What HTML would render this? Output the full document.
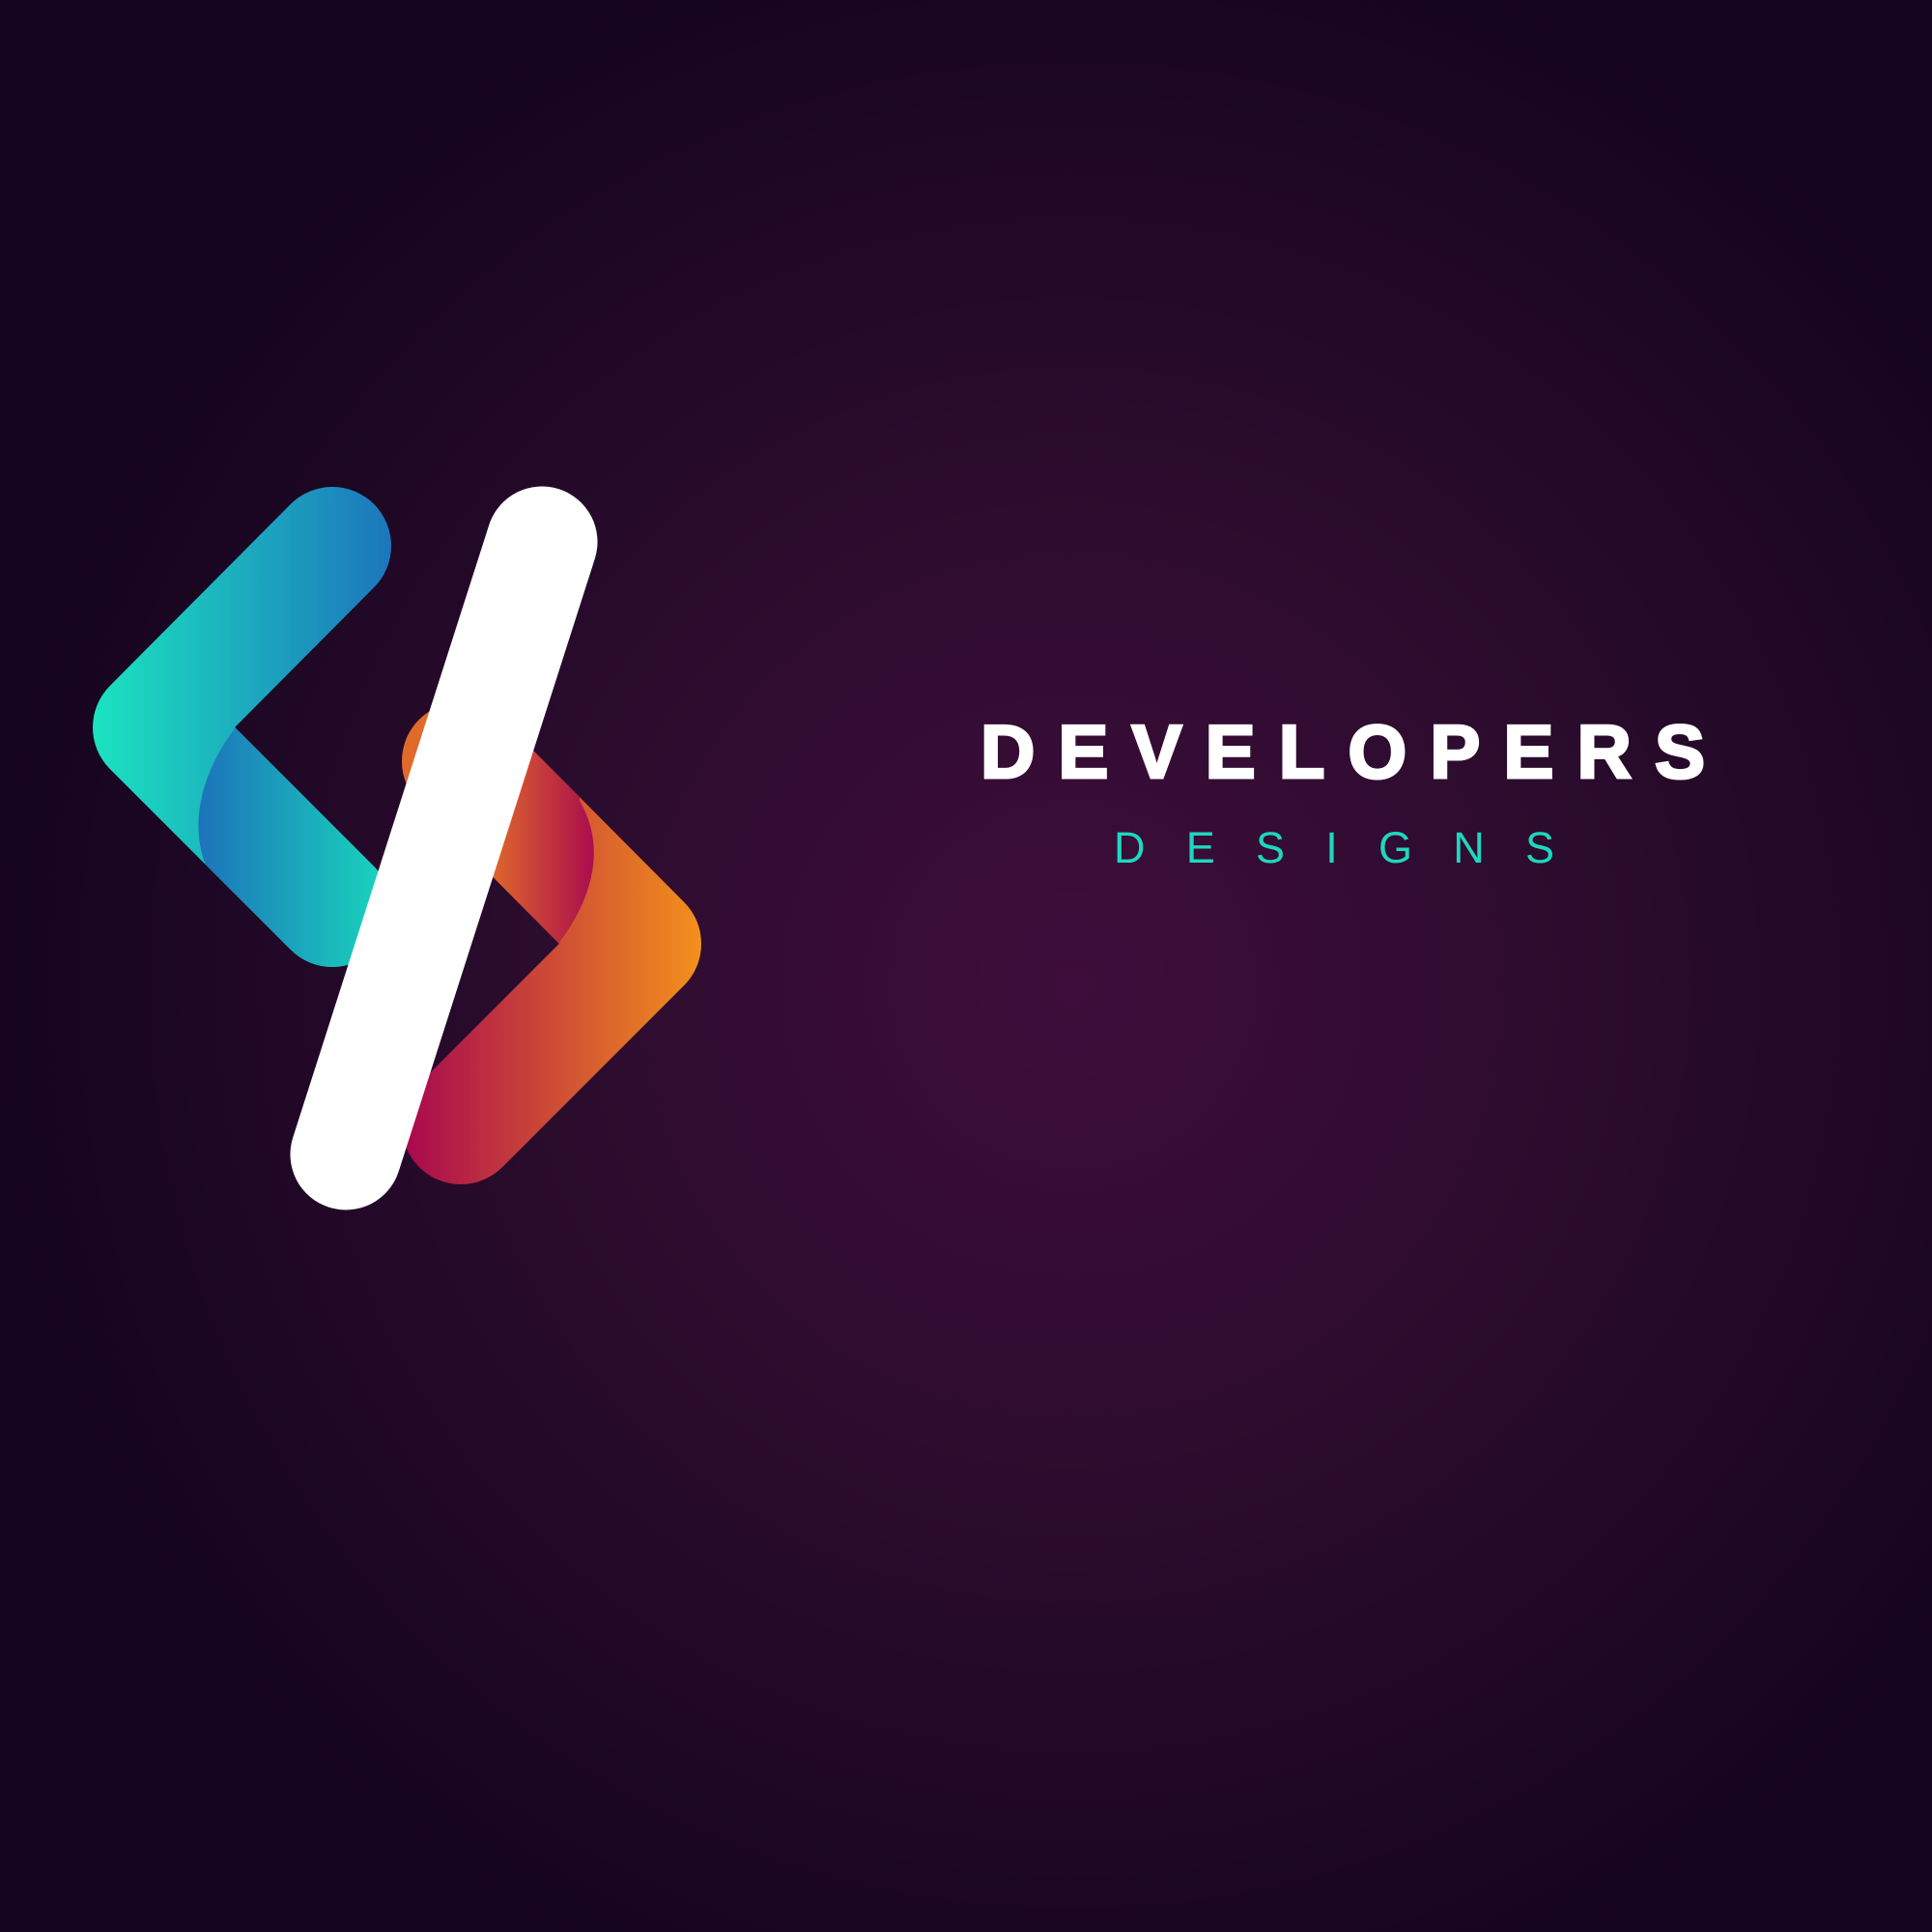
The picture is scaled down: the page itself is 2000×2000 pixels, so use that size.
<!DOCTYPE html>
<html><head><meta charset="utf-8"><style>
html,body{margin:0;padding:0;width:2000px;height:2000px;overflow:hidden;background:#14041c}
svg{display:block}
</style></head><body>
<svg width="2000" height="2000" viewBox="0 0 2000 2000" xmlns="http://www.w3.org/2000/svg">
<defs>
<radialGradient id="bg" cx="1110" cy="1020" r="1150" gradientUnits="userSpaceOnUse">
<stop offset="0" stop-color="#3e0d3b"/>
<stop offset="0.45" stop-color="#2c0c2e"/>
<stop offset="1" stop-color="#14041d"/>
</radialGradient>
<linearGradient id="t1" x1="96" y1="0" x2="405" y2="0" gradientUnits="userSpaceOnUse">
<stop offset="0" stop-color="#1ce3c0"/><stop offset="1" stop-color="#1c76bc"/>
</linearGradient>
<linearGradient id="t2" x1="200" y1="0" x2="400" y2="0" gradientUnits="userSpaceOnUse">
<stop offset="0" stop-color="#1d70ba"/><stop offset="1" stop-color="#19d5bd"/>
</linearGradient>
<linearGradient id="o1" x1="420" y1="0" x2="726" y2="0" gradientUnits="userSpaceOnUse">
<stop offset="0" stop-color="#a8094f"/><stop offset="1" stop-color="#f3901c"/>
</linearGradient>
<linearGradient id="o2" x1="505" y1="0" x2="620" y2="0" gradientUnits="userSpaceOnUse">
<stop offset="0" stop-color="#e06a2a"/><stop offset="1" stop-color="#a8094f"/>
</linearGradient>
<clipPath id="ct"><path d="M244,753 C215,790 190,850 217,905 L217,1100 L600,1100 L600,700 Z"/></clipPath>
<clipPath id="co"><path d="M578,977 C610,935 630,880 600,829 L600,500 L300,500 L300,977 Z"/></clipPath>
</defs>
<rect width="2000" height="2000" fill="url(#bg)"/>
<g fill="none" stroke-linecap="round" stroke-linejoin="round">
<polyline points="344,565 157,753 344,940" stroke="url(#t1)" stroke-width="122"/>
<line x1="157" y1="753" x2="344" y2="940" stroke="url(#t2)" stroke-width="122" clip-path="url(#ct)"/>
<polyline points="477,788 665,977 477,1165" stroke="url(#o1)" stroke-width="122"/>
<line x1="477" y1="788" x2="665" y2="977" stroke="url(#o2)" stroke-width="122" clip-path="url(#co)"/>
<line x1="561" y1="561" x2="358" y2="1195" stroke="#ffffff" stroke-width="115"/>
</g>
<text x="1015" y="805" textLength="750" lengthAdjust="spacing" font-family="Liberation Sans, sans-serif" font-weight="bold" font-size="78" fill="#ffffff" stroke="#ffffff" stroke-width="3">DEVELOPERS</text>
<text x="1153" y="893" textLength="456" lengthAdjust="spacing" font-family="Liberation Sans, sans-serif" font-size="45" fill="#1dd8be">DESIGNS</text>
</svg>
</body></html>
